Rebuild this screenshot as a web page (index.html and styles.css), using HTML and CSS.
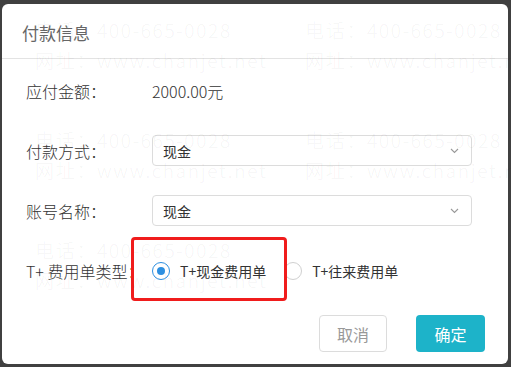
FILE: index.html
```html
<!DOCTYPE html>
<html lang="zh-CN">
<head>
  <meta charset="UTF-8">
  <meta name="viewport" content="width=device-width, initial-scale=1">
  <title>付款信息</title>
  <link rel="stylesheet" href="styles.css">
</head>
<body>
  <!-- Payment dialog -->
  <div class="dialog">
    <div class="dialog-header">
      <h2>付款信息</h2>
    </div>

    <div class="dialog-body">
      <div class="row">
        <label>应付金额：</label>
        <span class="amount">2000.00元</span>
      </div>

      <div class="row">
        <label>付款方式：</label>
        <div class="select">
          <span>现金</span>
          <svg class="chevron" width="9" height="6" viewBox="0 0 9 6"><path d="M1 1l3.5 3.5L8 1" fill="none" stroke="#999" stroke-width="1.1"/></svg>
        </div>
      </div>

      <div class="row">
        <label>账号名称：</label>
        <div class="select">
          <span>现金</span>
          <svg class="chevron" width="9" height="6" viewBox="0 0 9 6"><path d="M1 1l3.5 3.5L8 1" fill="none" stroke="#999" stroke-width="1.1"/></svg>
        </div>
      </div>

      <div class="row">
        <label>T+ 费用单类型：</label>
        <div class="radio-group">
          <span class="radio checked"></span>
          <span class="radio-text">T+现金费用单</span>
          <span class="radio"></span>
          <span class="radio-text">T+往来费用单</span>
          <!-- highlight frame drawn over the options -->
          <div class="highlight"></div>
        </div>
      </div>

      <div class="actions">
        <button class="btn btn-cancel">取消</button>
        <button class="btn btn-ok">确定</button>
      </div>
    </div>
  </div>

  <!-- Watermark overlay -->
  <div class="watermark">
    <div class="wm-tile"><p>电话：400-665-0028</p><p>网址：www.chanjet.net</p></div>
    <div class="wm-tile"><p>电话：400-665-0028</p><p>网址：www.chanjet.net</p></div>
    <div class="wm-tile"><p>电话：400-665-0028</p><p>网址：www.chanjet.net</p></div>
    <div class="wm-tile"><p>电话：400-665-0028</p><p>网址：www.chanjet.net</p></div>
    <div class="wm-tile"><p>电话：400-665-0028</p><p>网址：www.chanjet.net</p></div>
    <div class="wm-tile"><p>电话：400-665-0028</p><p>网址：www.chanjet.net</p></div>
    <div class="wm-tile"><p>电话：400-665-0028</p><p>网址：www.chanjet.net</p></div>
    <div class="wm-tile"><p>电话：400-665-0028</p><p>网址：www.chanjet.net</p></div>
  </div>
</body>
</html>
```

FILE: styles.css
```css
/* Reset */
* {
  box-sizing: border-box;
  margin: 0;
  padding: 0;
}

body {
  font-family: "Noto Sans CJK SC", "Noto Sans", sans-serif;
  background-color: #404040;
  width: 511px;
  height: 367px;
  overflow: hidden;
  position: relative;
}

/* Dialog */
.dialog {
  margin: 4px 3px 0 2px;
  width: 506px;
  height: 360px;
  background-color: #fff;
  border-radius: 6px;
}

.dialog-header {
  height: 55px;
  padding: 18px 0 0 20px;
  border-bottom: 1px solid #e3e3e3;
}

.dialog-header h2 {
  font-size: 17px;
  font-weight: normal;
  color: #666;
  line-height: 22px;
}

.dialog-body {
  padding: 16px 23px 0 24px;
}

.row {
  display: flex;
  align-items: center;
  height: 31px;
  margin-bottom: 29px;
  font-size: 16px;
  color: #333;
}

.row label {
  width: 126px;
  flex-shrink: 0;
  font-weight: 300;
}

.amount {
  font-size: 16px;
  font-weight: 300;
}

/* Select */
.select {
  width: 320px;
  height: 31px;
  border: 1px solid #dcdcdc;
  border-radius: 4px;
  display: flex;
  align-items: center;
  justify-content: space-between;
  padding: 0 12px 0 10px;
  font-size: 14px;
  color: #333;
}

/* Radios */
.radio-group {
  position: relative;
  display: flex;
  align-items: center;
  font-size: 14px;
}

.radio {
  width: 18px;
  height: 18px;
  border-radius: 50%;
  border: 1px solid #d0d0d0;
  display: flex;
  align-items: center;
  justify-content: center;
  margin-right: 10px;
}

.radio.checked {
  border-color: #2d8fe0;
}

.radio.checked::after {
  content: "";
  width: 8px;
  height: 8px;
  border-radius: 50%;
  background-color: #2d8fe0;
}

.radio-text {
  margin-right: 18px;
}

.highlight {
  position: absolute;
  left: -21px;
  top: -24px;
  width: 156px;
  height: 64px;
  border: 3px solid #f01c1c;
  border-radius: 4px;
}

/* Buttons */
.actions {
  display: flex;
  justify-content: flex-end;
  gap: 29px;
}

.btn {
  width: 68px;
  height: 37px;
  border-radius: 4px;
  font-family: inherit;
  font-size: 16px;
  cursor: pointer;
}

.btn-cancel {
  background-color: #fff;
  border: 1px solid #dcdcdc;
  color: #999;
}

.btn-ok {
  width: 69px;
  background-color: #1db3c9;
  border: none;
  color: #fff;
}

/* Watermark */
.watermark {
  position: absolute;
  left: -235px;
  top: 15px;
  width: 810px;
  display: flex;
  flex-wrap: wrap;
  pointer-events: none;
}

.wm-tile {
  width: 270px;
  height: 110px;
  font-family: "Noto Sans CJK SC", sans-serif;
  font-size: 19px;
  font-weight: 300;
  letter-spacing: 1.7px;
  line-height: 30px;
  color: rgba(0, 0, 0, 0.055);
  white-space: nowrap;
}
```
